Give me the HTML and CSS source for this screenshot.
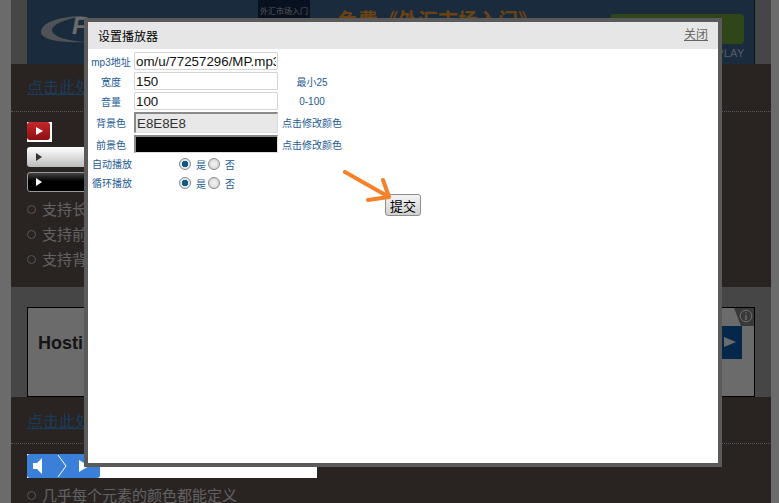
FILE: index.html
```html
<!DOCTYPE html>
<html lang="zh-CN">
<head>
    <meta charset="UTF-8">
    <meta name="viewport" content="width=device-width, initial-scale=1.0">
    <title>设置播放器</title>
    <link rel="stylesheet" href="styles.css">
</head>
<body>
    <div class="page">
        <div class="ad-top">
            <div class="banner">
                <svg class="banner-logo" width="46" height="28" viewBox="0 0 46 28">
                    <path d="M1 16C3 7 20 1 46 1C30 3 13 8 12 15C12 21 26 26 46 27C20 28 0 25 1 16Z" fill="#ddd"/>
                </svg>
                <span class="banner-f">F</span>
                <span class="banner-badge">外汇市场入门</span>
                <span class="banner-title">免费《外汇市场入门》</span>
                <span class="banner-btn"></span>
                <span class="banner-play">PLAY</span>
            </div>
        </div>

        <div class="head-row"><a href="#">点击此处</a></div>
        <div class="demo">
            <div class="yt-btn"><span class="tri"></span></div>
            <div class="bar bar-light"><span class="tri"></span></div>
            <div class="bar bar-dark"><span class="tri"></span></div>
            <ul class="features">
                <li>支持长</li>
                <li>支持前</li>
                <li>支持背</li>
            </ul>
        </div>

        <div class="ad-mid">
            <div class="ad-box">
                <span class="ad-name">Hosti</span>
                <span class="ad-blue"><span class="ad-tri"></span></span>
                <span class="ad-info">
                    <svg width="14" height="14" viewBox="0 0 14 14" fill="none" stroke="#fff">
                        <circle cx="7" cy="7" r="5.8"/>
                        <path d="M7 6v5M7 3.2v1.4" stroke-width="1.5"/>
                    </svg>
                </span>
            </div>
        </div>

        <div class="head-row head-row2"><a href="#">点击此处</a></div>
        <div class="demo demo2">
            <div class="blue-player">
                <div class="blue-ctrl">
                    <svg width="73" height="24" viewBox="0 0 73 24">
                        <path d="M6 9h4l5-5v16l-5-5H6Z" fill="#fff"/>
                        <path d="M31 1l8 11-8 11" fill="none" stroke="#fff"/>
                        <path d="M52 6l10 6-10 6Z" fill="#fff"/>
                    </svg>
                </div>
            </div>
            <ul class="features">
                <li>几乎每个元素的颜色都能定义</li>
            </ul>
        </div>
    </div>

    <div class="overlay"></div>

    <div class="modal">
        <div class="modal-head">
            <span>设置播放器</span>
            <a href="#">关闭</a>
        </div>
        <form class="form">
            <label>mp3地址</label>
            <input type="text" value="om/u/77257296/MP.mp3">
            <span></span>

            <label>宽度</label>
            <input type="text" value="150">
            <span class="hint-c">最小25</span>

            <label>音量</label>
            <input type="text" value="100">
            <span class="hint-c">0-100</span>

            <label>背景色</label>
            <input class="swatch swatch-bg" type="text" value="E8E8E8">
            <span>点击修改颜色</span>

            <label>前景色</label>
            <input class="swatch swatch-fg" type="text">
            <span>点击修改颜色</span>
        </form>
        <div class="radios">
            <div class="radio-row">
                <span class="radio-name">自动播放</span>
                <input type="radio" name="auto" checked><span class="radio-text">是</span>
                <input type="radio" name="auto"><span class="radio-text">否</span>
            </div>
            <div class="radio-row">
                <span class="radio-name">循环播放</span>
                <input type="radio" name="loop" checked><span class="radio-text">是</span>
                <input type="radio" name="loop"><span class="radio-text">否</span>
            </div>
        </div>
        <div class="submit-row">
            <button type="button">提交</button>
        </div>
        <svg class="arrow" width="52" height="36" viewBox="0 0 52 36" fill="none" stroke="#f5822a" stroke-width="4" stroke-linecap="round" stroke-linejoin="round">
            <path d="M3 2L47 27M41 10L47 27L26 30"/>
        </svg>
    </div>
</body>
</html>
```

FILE: styles.css
```css
* { margin: 0; padding: 0; box-sizing: border-box; }

html, body { height: 100%; overflow: hidden; }

body {
    background: #fff;
    padding-left: 11px;
    font-family: "Liberation Sans", "Noto Sans CJK SC", sans-serif;
}

.page {
    width: 760px;
    background: #625352;
    height: 503px;
    overflow: hidden;
}

/* Top banner */
.ad-top {
    height: 64px;
    padding: 0 16px;
    background: #a8a8a8;
}

.banner {
    position: relative;
    width: 728px;
    height: 64px;
    background: #3c678f;
    border-right: 1px solid #16304a;
    overflow: hidden;
}

.banner-logo { position: absolute; left: 13px; top: 15px; opacity: .8; }

.banner-f {
    position: absolute;
    left: 45px;
    top: 14px;
    font-size: 24px;
    line-height: 24px;
    font-weight: bold;
    font-style: italic;
    color: #fff;
}

.banner-badge {
    position: absolute;
    left: 231px;
    top: 0;
    width: 52px;
    height: 18px;
    background: #12294a;
    color: #ccc;
    font-size: 8px;
    line-height: 24px;
    text-align: center;
}

.banner-title {
    position: absolute;
    left: 311px;
    top: 5px;
    font-size: 20px;
    font-weight: bold;
    color: #ff9f2e;
    white-space: nowrap;
}

.banner-btn {
    position: absolute;
    left: 583px;
    top: 14px;
    width: 134px;
    height: 30px;
    border-radius: 4px;
    background: #6fa83a;
}

.banner-play {
    position: absolute;
    left: 689px;
    top: 47px;
    font-size: 11px;
    letter-spacing: .3px;
    color: #c8dcee;
}

/* Section heading */
.head-row {
    height: 48px;
    padding: 12px 16px 0;
    border-bottom: 1px dotted #ccc;
    font-size: 16px;
    line-height: 24px;
}

.head-row a { color: #3f8fd2; }

.demo {
    height: 175px;
    padding: 10px 16px 0;
}

/* Flash players stay bright above the dim layer */
.yt-btn, .bar, .blue-player {
    position: relative;
    z-index: 2;
}

.yt-btn {
    width: 25px;
    height: 20px;
    margin-bottom: 5px;
    background: #fff;
}

.yt-btn .tri {
    display: block;
    position: relative;
    width: 23px;
    height: 18px;
    background: linear-gradient(#c4272b, #8e0f12);
    border-radius: 3px;
}

.yt-btn .tri::after {
    content: "";
    position: absolute;
    left: 9px;
    top: 5px;
    border-left: 7px solid #fff;
    border-top: 4px solid transparent;
    border-bottom: 4px solid transparent;
}

.bar {
    width: 180px;
    height: 20px;
    margin-bottom: 5px;
    padding: 6px 9px;
    background: linear-gradient(#fff, #d0d0d0 70%, #bbb);
    border-radius: 3px;
}

.bar .tri {
    display: block;
    width: 0;
    border-left: 6px solid #333;
    border-top: 4px solid transparent;
    border-bottom: 4px solid transparent;
}

.bar-dark {
    background: linear-gradient(#444, #000 45%);
    border: 1px solid #999;
    padding: 5px 8px;
}

.bar-dark .tri { border-left-color: #fff; }

.features {
    list-style: none;
    margin-top: 5px;
    color: #e6e6e6;
    font-size: 15px;
    line-height: 25px;
}

.features li {
    display: flex;
    align-items: center;
    gap: 6px;
    white-space: nowrap;
}

.features li::before {
    content: "";
    width: 7px;
    height: 7px;
    border: 1.5px solid #ccc;
    border-radius: 50%;
}

/* Middle ad */
.ad-mid {
    height: 110px;
    padding: 20px 16px 0;
    background: #a8a8a8;
}

.ad-box {
    position: relative;
    width: 728px;
    height: 90px;
    background: #fff;
    border: 1px solid #000;
}

.ad-name {
    position: absolute;
    left: 10px;
    top: 25px;
    font-size: 18px;
    font-weight: bold;
    color: #333;
}

.ad-blue {
    position: absolute;
    left: 694px;
    top: 18px;
    width: 20px;
    height: 33px;
    background: #0e5fb0;
}

.ad-tri {
    position: absolute;
    left: 2px;
    top: 11px;
    border-left: 12px solid #fff;
    border-top: 5px solid transparent;
    border-bottom: 5px solid transparent;
}

.ad-info {
    position: absolute;
    right: 0;
    top: 0;
    width: 20px;
    height: 18px;
    padding: 1px 0 0 5px;
    background: #888;
    clip-path: polygon(0 0, 100% 0, 100% 100%, 35% 100%);
}

.head-row2 { height: 47px; padding-top: 13px; }

.demo2 { padding-top: 10px; }

.blue-player {
    width: 290px;
    height: 24px;
    background: #fff;
}

.blue-ctrl {
    width: 73px;
    height: 24px;
    background: #3a80d8;
    border-radius: 3px;
}

.demo2 .features { margin-top: 5px; }

/* Dim layer */
.overlay {
    position: fixed;
    inset: 0;
    z-index: 1;
    background: rgba(0, 0, 0, .58);
}

/* Dialog */
.modal {
    position: absolute;
    left: 84px;
    top: 18px;
    z-index: 3;
    width: 638px;
    height: 449px;
    background: #fff;
    border: 4px solid #5a5a5a;
}

.modal-head {
    display: flex;
    justify-content: space-between;
    height: 27px;
    padding: 6px 10px 0;
    background: #e6e6e6;
    font-size: 12px;
    line-height: 18px;
    color: #000;
}

.modal-head a { color: #666; margin-top: -2px; }

.form {
    display: grid;
    grid-template-columns: 46px 144px auto;
    grid-template-rows: 18px 18px 18px 21px 18px;
    row-gap: 2px;
    align-items: center;
    padding-top: 3px;
    font-size: 10px;
    color: #1d5a94;
}

.form label { text-align: center; white-space: nowrap; }

.form span { padding-left: 4px; }

.form .hint-c {
    width: 68px;
    padding-left: 0;
    text-align: center;
}

.form input {
    width: 144px;
    height: 18px;
    padding: 0 1px;
    border: 1px solid #d4d4d4;
    border-radius: 1px;
    font: 13.33px "Liberation Sans", sans-serif;
    color: #111;
    background: #fff;
    outline: none;
}

.form .swatch {
    border-width: 2px 1px 1px 2px;
    border-color: #8a8a8a #ddd #ddd #8a8a8a;
    border-radius: 0;
    color: #333;
}

.form .swatch-bg { height: 21px; background: #e8e8e8; }
.form .swatch-fg { background: #000; }

.radios {
    margin-top: 1px;
    font-size: 10px;
    color: #1d5a94;
}

.radio-row {
    display: flex;
    align-items: center;
    height: 19px;
    padding-left: 4px;
}

.radio-name { width: 87px; }

.radio-text { margin: 2px 0 0 5px; width: 12px; }

.radio-row input {
    appearance: none;
    width: 12px;
    height: 12px;
    border: 1px solid #8a8a8a;
    border-radius: 50%;
    background: radial-gradient(circle, #f4f4f4, #cfcfcf);
}

.radio-row input:checked {
    background: radial-gradient(circle, #14597f 0 3px, #dfe8ee 3.5px);
}

.submit-row {
    display: flex;
    padding: 2px 0 0 297px;
}

.submit-row button {
    width: 36px;
    height: 22px;
    border: 1px solid #8e8e8e;
    border-radius: 3px;
    background: linear-gradient(#f4f4f4, #d0d0d0);
    font: 13px "Noto Sans CJK SC", sans-serif;
    color: #000;
}

.arrow {
    position: absolute;
    left: 254px;
    top: 148px;
}
```
